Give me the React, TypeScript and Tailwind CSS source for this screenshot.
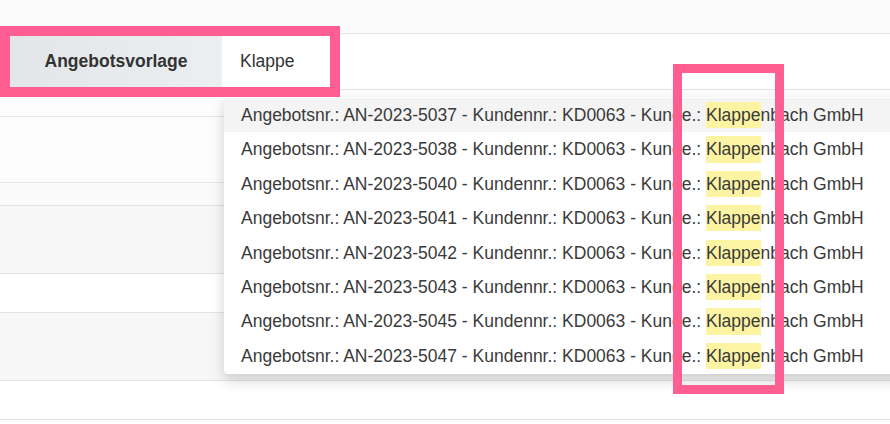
import React from 'react';

const offers = ['5037', '5038', '5040', '5041', '5042', '5043', '5045', '5047'];

const App: React.FC = () => {
  return (
    <div className="relative w-[890px] h-[424px] overflow-hidden bg-white text-[#333] font-['Liberation_Sans',Arial,sans-serif]">
      {/* page background: header strip, form row, table rows */}
      <div className="h-[34px] bg-[#fbfbfb] border-b border-[#e2e2e2]" />
      <div className="flex h-[56px] border-b border-[#e2e2e2]">
        <div className="ml-[10px] w-[212px] flex items-center justify-center bg-gradient-to-r from-[#e3e6e9] to-[#eceef0] text-[17.5px] font-bold text-[#333]">
          Angebotsvorlage
        </div>
        <div className="flex-1 flex items-center pl-[18px] text-[17.5px] text-[#333]">Klappe</div>
      </div>
      <div className="h-[27px] bg-[#fdfdfd] border-b border-[#e6e6e6]" />
      <div className="h-[66px] bg-[#fcfcfc] border-b border-[#e6e6e6]" />
      <div className="h-[23px] bg-[#fafafa] border-b border-[#e3e3e3]" />
      <div className="h-[68px] bg-[#f7f7f7] border-b border-[#e3e3e3]" />
      <div className="h-[39px] bg-white border-b border-[#e3e3e3]" />
      <div className="h-[68px] bg-[#f7f7f7] border-b border-[#e3e3e3]" />
      <div className="h-[39px] bg-white border-b border-[#e3e3e3]" />

      {/* autocomplete dropdown */}
      <div className="absolute left-[224px] top-[97px] w-[690px] bg-white rounded-b-[4px] shadow-[0_6px_14px_rgba(0,0,0,0.18)] py-[1px]">
        {offers.map((n, i) => (
          <div
            key={n}
            className={`h-[34.4px] flex items-center pl-[17px] text-[17.5px] text-[#3a3a3a] whitespace-nowrap ${i === 0 ? 'bg-[#f4f4f4]' : ''}`}
          >
            Angebotsnr.: AN-2023-{n} - Kundennr.: KD0063 - Kunde.:&nbsp;
            <span className="bg-[#fcf4a3]">Klappe</span>nbach GmbH
          </div>
        ))}
      </div>

      {/* annotation frames */}
      <div className="absolute left-0 top-[26px] w-[340px] h-[71px] border-[10px] border-[#ff5e93]" />
      <div className="absolute left-[673px] top-[64px] w-[111px] h-[330px] border-[9px] border-[#ff5e93]" />
    </div>
  );
};

export default App;
